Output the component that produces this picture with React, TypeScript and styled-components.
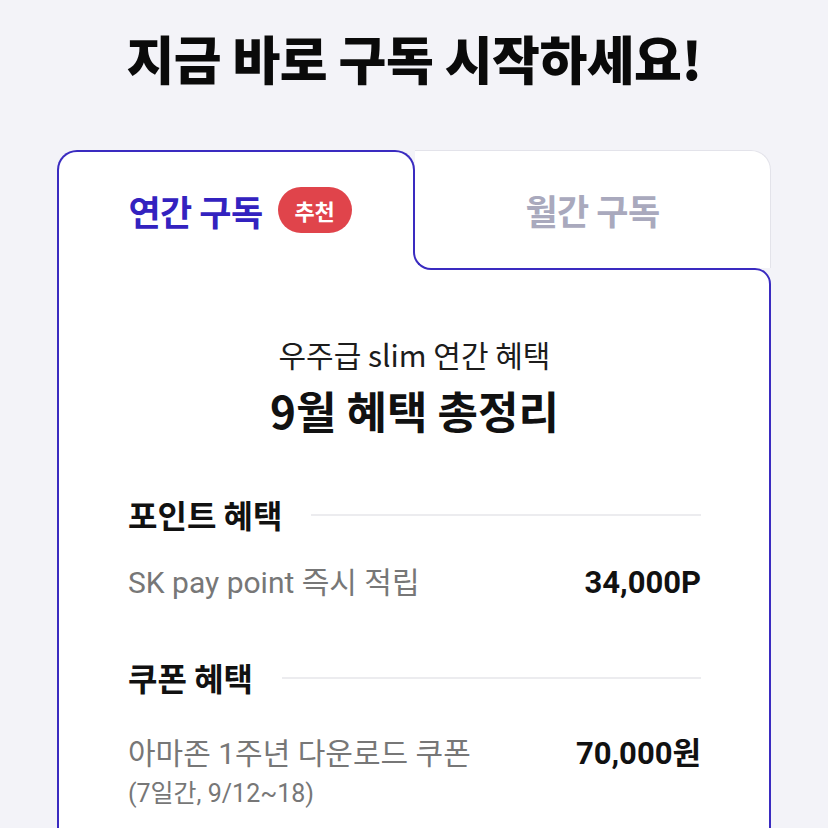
import styled, { createGlobalStyle } from "styled-components";

const PURPLE = "#3a2bc0";

const GlobalStyle = createGlobalStyle`
  html, body {
    margin: 0;
    padding: 0;
    background: #f3f3f8;
  }
  body {
    font-family: "Roboto", "Noto Sans CJK KR", sans-serif;
    color: #111;
  }
`;

const Page = styled.div`
  width: 828px;
  height: 828px;
  overflow: hidden;
  padding-top: 27px;
  box-sizing: border-box;
`;

const Heading = styled.h1`
  margin: 0 0 61px;
  font-family: "Noto Sans CJK KR", sans-serif;
  font-size: 52px;
  line-height: 62px;
  font-weight: 900;
  text-align: center;
  letter-spacing: -0.5px;
  color: #0a0a0a;
`;

const Card = styled.div`
  width: 714px;
  margin: 0 auto;
`;

const TabRow = styled.div`
  position: relative;
  z-index: 1;
  display: grid;
  grid-template-columns: 358px 1fr;
  align-items: end;
  margin-bottom: -2px;
`;

const ActiveTab = styled.div`
  height: 120px;
  box-sizing: border-box;
  display: flex;
  align-items: center;
  justify-content: center;
  gap: 15px;
  padding: 0 0 2px 8px;
  background: #fff;
  border: 2px solid ${PURPLE};
  border-bottom: none;
  border-radius: 20px 20px 0 0;
`;

const InactiveTab = styled.div`
  position: relative;
  height: 118px;
  margin-bottom: 2px;
  box-sizing: border-box;
  display: flex;
  align-items: center;
  justify-content: center;
  background: #fff;
  border: 1px solid #e3e3ea;
  border-left: none;
  border-bottom: none;
  border-radius: 0 20px 0 0;

  /* inner rounded corner joining the active tab and the panel */
  &::before,
  &::after {
    content: "";
    position: absolute;
    left: -2px;
    bottom: -2px;
    width: 22px;
    height: 22px;
    box-sizing: border-box;
  }
  &::before {
    background: #fff;
  }
  &::after {
    border-left: 2px solid ${PURPLE};
    border-bottom: 2px solid ${PURPLE};
    border-bottom-left-radius: 18px;
  }
`;

const TabLabel = styled.span<{ $active?: boolean }>`
  font-family: "Noto Sans CJK KR", sans-serif;
  font-size: 35px;
  font-weight: 700;
  letter-spacing: -0.5px;
  color: ${(p) => (p.$active ? "#3322bf" : "#a9a9bd")};
`;

const Badge = styled.span`
  display: inline-flex;
  align-items: center;
  justify-content: center;
  width: 74px;
  height: 46px;
  border-radius: 23px;
  background: #e0444b;
  color: #fff;
  font-family: "Noto Sans CJK KR", sans-serif;
  font-size: 22px;
  font-weight: 700;
`;

const Panel = styled.div`
  background: #fff;
  border: 2px solid ${PURPLE};
  border-radius: 0 16px 16px 16px;
  padding: 65px 68px 60px 69px;
  min-height: 700px;
`;

const Intro = styled.div`
  text-align: center;
  margin-bottom: 59px;
`;

const IntroSub = styled.div`
  font-family: "Noto Sans CJK KR", sans-serif;
  font-size: 30px;
  line-height: 38px;
  color: #1c1c1c;
`;

const IntroTitle = styled.div`
  margin-top: 11px;
  font-family: "Noto Sans CJK KR", sans-serif;
  font-size: 44px;
  line-height: 52px;
  font-weight: 700;
  color: #111;
`;

const Section = styled.section`
  & + & {
    margin-top: 56px;
  }
`;

const SectionHead = styled.div<{ $spacing?: number }>`
  display: flex;
  align-items: center;
  margin-bottom: ${(p) => p.$spacing ?? 30}px;
`;

const SectionTitle = styled.h2`
  margin: 0;
  font-family: "Noto Sans CJK KR", sans-serif;
  font-size: 32px;
  line-height: 39px;
  font-weight: 700;
  color: #111;
`;

const Rule = styled.div`
  flex: 1;
  height: 2px;
  margin-left: 29px;
  background: #ececef;
`;

const Row = styled.div`
  display: flex;
  justify-content: space-between;
  align-items: flex-start;
`;

const ItemName = styled.div`
  font-size: 30px;
  line-height: 38px;
  color: #777;
`;

const ItemNote = styled.div`
  margin-top: 5px;
  font-size: 25px;
  line-height: 32px;
  color: #777;
`;

const ItemValue = styled.div`
  font-size: 31px;
  line-height: 38px;
  font-weight: 700;
  color: #111;
`;

export default function App() {
  return (
    <Page>
      <GlobalStyle />
      <Heading>지금 바로 구독 시작하세요!</Heading>
      <Card>
        <TabRow>
          <ActiveTab>
            <TabLabel $active>연간 구독</TabLabel>
            <Badge>추천</Badge>
          </ActiveTab>
          <InactiveTab>
            <TabLabel>월간 구독</TabLabel>
          </InactiveTab>
        </TabRow>
        <Panel>
          <Intro>
            <IntroSub>우주급 slim 연간 혜택</IntroSub>
            <IntroTitle>9월 혜택 총정리</IntroTitle>
          </Intro>
          <Section>
            <SectionHead>
              <SectionTitle>포인트 혜택</SectionTitle>
              <Rule />
            </SectionHead>
            <Row>
              <ItemName>SK pay point 즉시 적립</ItemName>
              <ItemValue>34,000P</ItemValue>
            </Row>
          </Section>
          <Section>
            <SectionHead $spacing={38}>
              <SectionTitle>쿠폰 혜택</SectionTitle>
              <Rule />
            </SectionHead>
            <Row>
              <div>
                <ItemName>아마존 1주년 다운로드 쿠폰</ItemName>
                <ItemNote>(7일간, 9/12~18)</ItemNote>
              </div>
              <ItemValue>70,000원</ItemValue>
            </Row>
          </Section>
        </Panel>
      </Card>
    </Page>
  );
}
